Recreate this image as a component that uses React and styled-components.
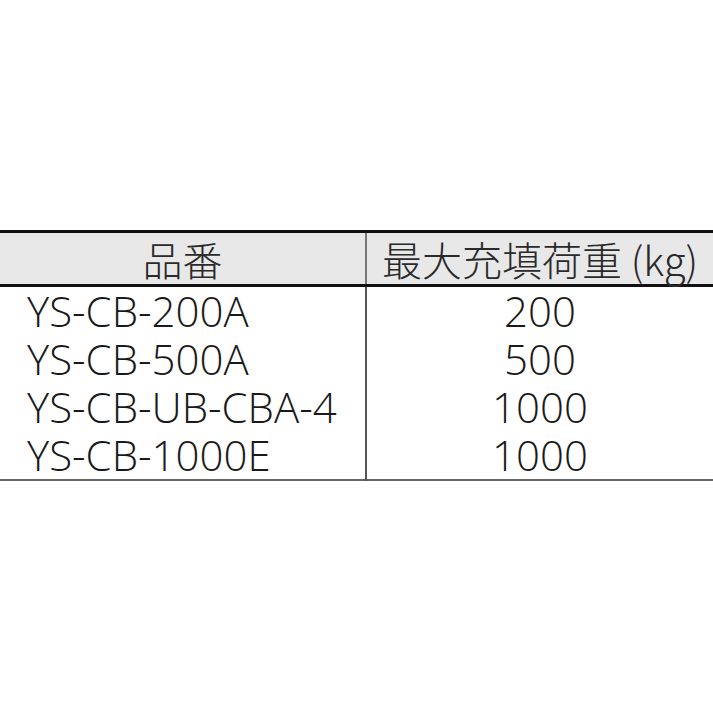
import React from 'react';
import styled, { createGlobalStyle } from 'styled-components';

const GlobalStyle = createGlobalStyle`
  html, body {
    margin: 0;
    padding: 0;
    background: #ffffff;
  }
  body {
    font-family: "Open Sans", "Noto Sans CJK JP", sans-serif;
    color: #1e1e1e;
  }
`;

const rows = [
  { model: 'YS-CB-200A', load: '200' },
  { model: 'YS-CB-500A', load: '500' },
  { model: 'YS-CB-UB-CBA-4', load: '1000' },
  { model: 'YS-CB-1000E', load: '1000' },
];

export default function App() {
  return (
    <Page>
      <GlobalStyle />
      <SpecTable>
        <thead>
          <tr>
            <HeadCell>品番</HeadCell>
            <HeadCell divider>最大充填荷重 (kg)</HeadCell>
          </tr>
        </thead>
        <tbody>
          {rows.map((r, i) => (
            <tr key={i}>
              <ModelCell>{r.model}</ModelCell>
              <LoadCell>{r.load}</LoadCell>
            </tr>
          ))}
        </tbody>
      </SpecTable>
    </Page>
  );
}

const Page = styled.div`
  width: 713px;
  height: 713px;
  padding-top: 230px;
  box-sizing: border-box;
`;

const SpecTable = styled.table`
  width: 100%;
  border-collapse: collapse;
  border-top: 3px solid #111;
  border-bottom: 2px solid #666;
`;

const HeadCell = styled.th`
  background: #e8e8e8;
  height: 51px;
  padding: 0;
  font-family: "Noto Sans CJK JP", sans-serif;
  font-weight: 300;
  font-size: 40px;
  color: #2a2a2a;
  text-align: center;
  border-bottom: 3px solid #111;
  border-left: ${p => (p.divider ? '2px solid #777' : 'none')};
  width: ${p => (p.divider ? 'auto' : '365px')};
  line-height: 48px;
  white-space: nowrap;
`;

const BodyCell = styled.td`
  height: 48px;
  padding: 0;
  font-size: 42px;
  font-weight: 300;
  line-height: 48px;
  color: #1a1a1a;
  vertical-align: middle;
  white-space: nowrap;
`;

const ModelCell = styled(BodyCell)`
  padding-left: 27px;
  text-align: left;
`;

const LoadCell = styled(BodyCell)`
  border-left: 2px solid #555;
  text-align: center;
`;
